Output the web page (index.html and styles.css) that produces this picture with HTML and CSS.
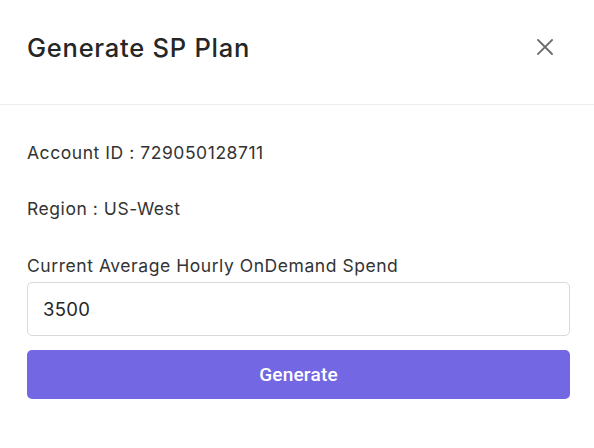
FILE: index.html
```html
<!DOCTYPE html>
<html>
<head>
<meta charset="utf-8">
<link rel="stylesheet" href="styles.css">
</head>
<body>
<div class="dialog">
  <div class="header">
    <h1 class="title">Generate SP Plan</h1>
    <button class="close" aria-label="Close">
      <svg width="16" height="16" viewBox="0 0 16 16"><path d="M1 1L15 15M15 1L1 15" stroke="#6b6b6b" stroke-width="1.8" stroke-linecap="square" fill="none"/></svg>
    </button>
  </div>
  <div class="content">
    <p class="info">Account ID : 729050128711</p>
    <p class="info info-gap">Region : US-West</p>
    <label class="label" for="spend">Current Average Hourly OnDemand Spend</label>
    <input id="spend" class="input" type="text" value="3500">
    <button class="generate">Generate</button>
  </div>
</div>
</body>
</html>
```
FILE: styles.css
```css
* { box-sizing: border-box; }
body {
  margin: 0;
  background: #fff;
  font-family: "Inter", "Open Sans", sans-serif;
  color: #2b2b2b;
}
.dialog {
  width: 594px;
  height: 448px;
  background: #fff;
}
.header {
  height: 105px;
  border-bottom: 1px solid #ececec;
  display: flex;
  align-items: center;
  justify-content: space-between;
  padding: 0 41px 0 27px;
}
.title {
  margin: 0;
  font-size: 25.5px;
  font-weight: 500;
  color: #262626;
  letter-spacing: 0.75px;
  line-height: 30px;
  padding-bottom: 9px;
}
.close {
  border: 0;
  background: none;
  padding: 0;
  width: 16px;
  height: 16px;
  display: flex;
  margin-bottom: 11px;
}
.content {
  padding: 36px 24px 0 27px;
  display: flex;
  flex-direction: column;
}
.info, .label {
  margin: 0;
  font-size: 17.5px;
  line-height: 24px;
  letter-spacing: 0.55px;
  color: #333;
}
.info-gap { margin-top: 32px; }
.label { margin-top: 33px; }
.input {
  margin-top: 4px;
  height: 54px;
  border: 1px solid #d9d9d9;
  border-radius: 5px;
  padding: 0 15px;
  font-family: inherit;
  font-size: 18.5px;
  letter-spacing: 0.3px;
  color: #262626;
  outline: none;
}
.generate {
  margin-top: 14px;
  height: 49px;
  border: 0;
  border-radius: 5px;
  background: #7367e4;
  color: #fff;
  font-family: "Roboto", "Liberation Sans", sans-serif;
  font-size: 19px;
  letter-spacing: 0.2px;
  font-weight: 500;
  padding-bottom: 2px;
}
```
